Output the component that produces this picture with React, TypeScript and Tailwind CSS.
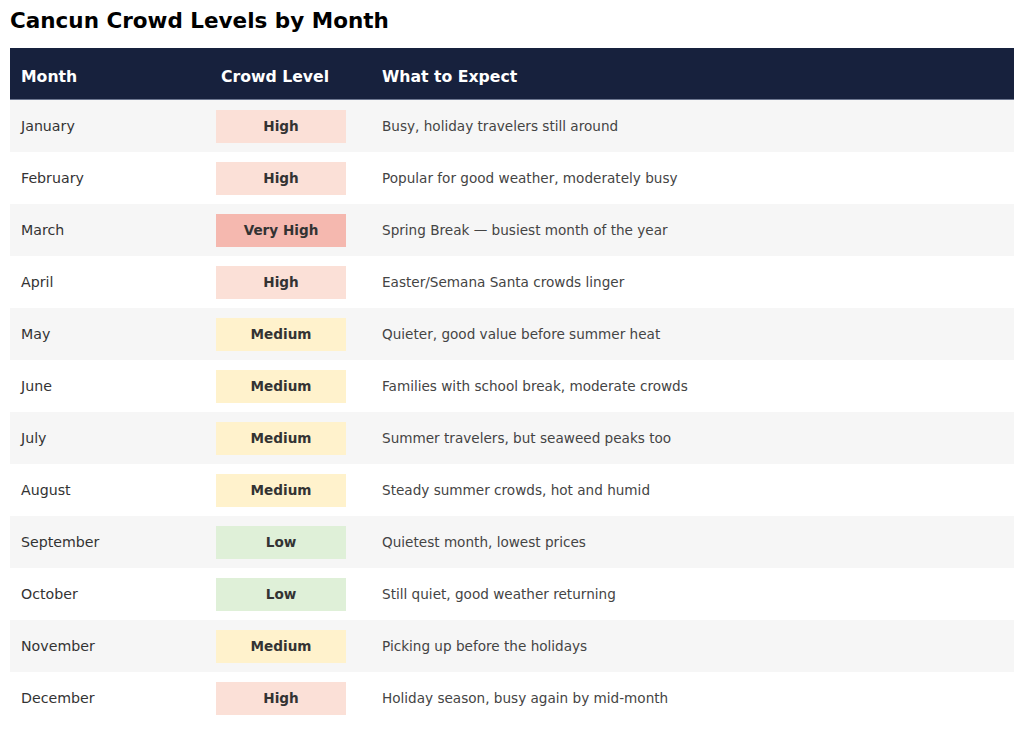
import React from "react";

type Level = "High" | "Very High" | "Medium" | "Low";

const rows: { m: string; l: Level; d: string }[] = [
  { m: "January", l: "High", d: "Busy, holiday travelers still around" },
  { m: "February", l: "High", d: "Popular for good weather, moderately busy" },
  { m: "March", l: "Very High", d: "Spring Break — busiest month of the year" },
  { m: "April", l: "High", d: "Easter/Semana Santa crowds linger" },
  { m: "May", l: "Medium", d: "Quieter, good value before summer heat" },
  { m: "June", l: "Medium", d: "Families with school break, moderate crowds" },
  { m: "July", l: "Medium", d: "Summer travelers, but seaweed peaks too" },
  { m: "August", l: "Medium", d: "Steady summer crowds, hot and humid" },
  { m: "September", l: "Low", d: "Quietest month, lowest prices" },
  { m: "October", l: "Low", d: "Still quiet, good weather returning" },
  { m: "November", l: "Medium", d: "Picking up before the holidays" },
  { m: "December", l: "High", d: "Holiday season, busy again by mid-month" },
];

const badge: Record<Level, string> = {
  High: "bg-[#fbe0d7]",
  "Very High": "bg-[#f5b8af]",
  Medium: "bg-[#fff2cc]",
  Low: "bg-[#dff0d8]",
};

export default function App() {
  return (
    <div
      className="w-[1024px] h-[735px] bg-white px-[10px] pt-[7px]"
      style={{ fontFamily: '"DejaVu Sans", sans-serif' }}
    >
      <h1 className="text-[21.5px] font-bold text-black leading-[28px] mb-[13px]">
        Cancun Crowd Levels by Month
      </h1>
      <div className="w-[1004px]">
        <div className="grid grid-cols-[200px_161px_1fr] h-[52px] items-center pt-[7px] bg-[#17213d] text-white font-bold text-[15.7px] leading-[20px] border-b border-[#6d7790]">
          <div className="pl-[11px]">Month</div>
          <div className="pl-[11px]">Crowd Level</div>
          <div className="pl-[11px]">What to Expect</div>
        </div>
        {rows.map((r, i) => (
          <div
            key={r.m}
            className={`grid grid-cols-[200px_161px_1fr] h-[52px] items-center leading-[20px] ${
              i % 2 === 0 ? "bg-[#f6f6f6]" : "bg-white"
            }`}
          >
            <div className="pl-[11px] text-[14.2px] text-[#333333]">{r.m}</div>
            <div className="pl-[6px]">
              <div
                className={`w-[130px] h-[33px] flex items-center justify-center text-[13.6px] font-bold text-[#333333] ${badge[r.l]}`}
              >
                {r.l}
              </div>
            </div>
            <div className="pl-[11px] text-[13.6px] text-[#444444]">{r.d}</div>
          </div>
        ))}
      </div>
    </div>
  );
}
